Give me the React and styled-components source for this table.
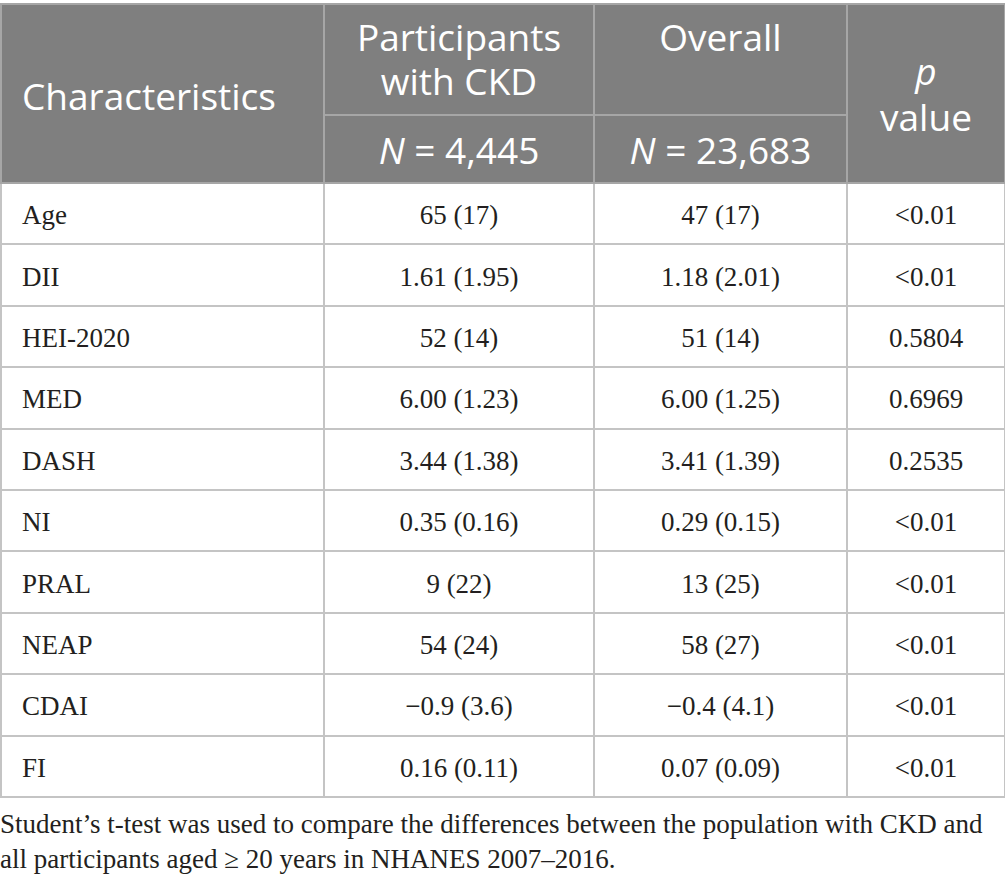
import React from "react";
import styled, { createGlobalStyle } from "styled-components";

const GlobalStyle = createGlobalStyle`
  html, body {
    margin: 0;
    padding: 0;
    background: #ffffff;
  }
`;

const Page = styled.div`
  padding: 3px 0 0 0;
  width: 1005px;
  box-sizing: border-box;
`;

const Table = styled.table`
  width: 1004px;
  border-collapse: collapse;
  table-layout: fixed;
  border: 2px solid #b4b4b4;
`;

const HeadRow = styled.tr`
  height: ${({ $h }) => $h};
`;

const BodyRow = styled.tr`
  height: 61.4px;
`;

const HeadCell = styled.th`
  box-sizing: border-box;
  background: #7f7f7f;
  color: #ffffff;
  font-family: "Open Sans", "Noto Sans", sans-serif;
  font-weight: 400;
  font-size: 37px;
  line-height: ${({ $lh }) => $lh || "44px"};
  border: 2px solid #a6a6a6;
  text-align: ${({ $align }) => $align || "center"};
  vertical-align: ${({ $valign }) => $valign || "middle"};
  padding: ${({ $pad }) => $pad || "0 12px"};
`;

const Italic = styled.i`
  font-style: italic;
`;

const Cell = styled.td`
  box-sizing: border-box;
  font-family: "Liberation Serif", "Times New Roman", serif;
  font-size: 27px;
  color: #231f20;
  border: 2px solid #c4c4c4;
  text-align: ${({ $align }) => $align || "center"};
  padding: ${({ $align }) => ($align === "left" ? "4px 0 0 20px" : "4px 8px 0")};
`;

const Caption = styled.p`
  margin: 9px 0 0 0;
  font-family: "Liberation Serif", "Times New Roman", serif;
  font-size: 27px;
  line-height: 35px;
  color: #231f20;
  width: 995px;
`;

const rows = [
  ["Age", "65 (17)", "47 (17)", "<0.01"],
  ["DII", "1.61 (1.95)", "1.18 (2.01)", "<0.01"],
  ["HEI-2020", "52 (14)", "51 (14)", "0.5804"],
  ["MED", "6.00 (1.23)", "6.00 (1.25)", "0.6969"],
  ["DASH", "3.44 (1.38)", "3.41 (1.39)", "0.2535"],
  ["NI", "0.35 (0.16)", "0.29 (0.15)", "<0.01"],
  ["PRAL", "9 (22)", "13 (25)", "<0.01"],
  ["NEAP", "54 (24)", "58 (27)", "<0.01"],
  ["CDAI", "\u22120.9 (3.6)", "\u22120.4 (4.1)", "<0.01"],
  ["FI", "0.16 (0.11)", "0.07 (0.09)", "<0.01"],
];

export default function App() {
  return (
    <Page>
      <GlobalStyle />
      <Table>
        <colgroup>
          <col style={{ width: 323 }} />
          <col style={{ width: 270 }} />
          <col style={{ width: 253 }} />
          <col style={{ width: 158 }} />
        </colgroup>
        <thead>
          <HeadRow $h="111px">
            <HeadCell rowSpan={2} $align="left" $pad="4px 0 0 20px">
              Characteristics
            </HeadCell>
            <HeadCell $valign="top" $pad="10px 20px 0">
              Participants with CKD
            </HeadCell>
            <HeadCell $valign="top" $pad="10px 10px 0">
              Overall
            </HeadCell>
            <HeadCell rowSpan={2} $pad="0 10px" $lh="46px">
              <Italic>p</Italic>
              <br />
              value
            </HeadCell>
          </HeadRow>
          <HeadRow $h="68px">
            <HeadCell $pad="2px 10px 0">
              <Italic>N</Italic> = 4,445
            </HeadCell>
            <HeadCell $pad="2px 10px 0">
              <Italic>N</Italic> = 23,683
            </HeadCell>
          </HeadRow>
        </thead>
        <tbody>
          {rows.map((r) => (
            <BodyRow key={r[0]}>
              <Cell $align="left">{r[0]}</Cell>
              <Cell>{r[1]}</Cell>
              <Cell>{r[2]}</Cell>
              <Cell>{r[3]}</Cell>
            </BodyRow>
          ))}
        </tbody>
      </Table>
      <Caption>
        Student’s t-test was used to compare the differences between the
        population with CKD and all participants aged ≥ 20 years in NHANES
        2007–2016.
      </Caption>
    </Page>
  );
}
